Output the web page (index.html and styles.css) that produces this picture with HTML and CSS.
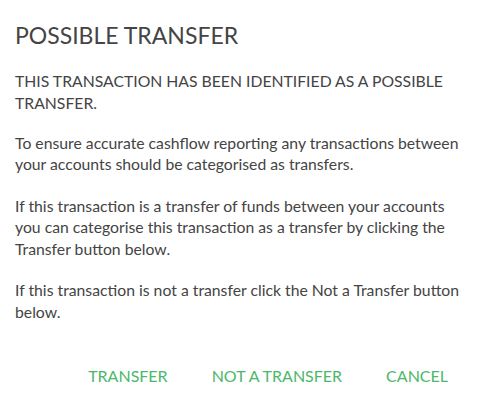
FILE: index.html
```html
<html>
    <head>
        <title>Possible Transfer</title>
        <link rel="stylesheet" href="styles.css">
    </head>
    <body>
        <div id="dialog">
            <h1>POSSIBLE TRANSFER</h1>
            <p class="lead">THIS TRANSACTION HAS BEEN IDENTIFIED AS A POSSIBLE TRANSFER.</p>
            <p>To ensure accurate cashflow reporting any transactions between your accounts should be categorised as transfers.</p>
            <p>If this transaction is a transfer of funds between your accounts you can categorise this transaction as a transfer by clicking the Transfer button below.</p>
            <p>If this transaction is not a transfer click the Not a Transfer button below.</p>
            <div id="buttons">
                <span class="button">TRANSFER</span>
                <span class="button">NOT A TRANSFER</span>
                <span class="button">CANCEL</span>
            </div>
        </div>
    </body>
</html>
```

FILE: styles.css
```css
body {
    margin: 0;
    background-color: #fff;
    font-family: Lato, "Open Sans", sans-serif;
    color: #444;
}
#dialog {
    width: 482px;
    height: 400px;
    padding: 21px 15px 0 15px;
    box-sizing: border-box;
}
h1 {
    font-size: 23px;
    font-weight: normal;
    margin: 0 0 21px 0;
    line-height: 28px;
}
p {
    font-size: 15.75px;
    line-height: 21.5px;
    margin: 0 0 20px 0;
}
p.lead {
    margin-bottom: 18.5px;
}
#buttons {
    display: flex;
    justify-content: flex-end;
    gap: 44px;
    padding-right: 19px;
    margin-top: 44px;
}
.button {
    color: #4cb86a;
    font-size: 16px;
    cursor: pointer;
}
```
